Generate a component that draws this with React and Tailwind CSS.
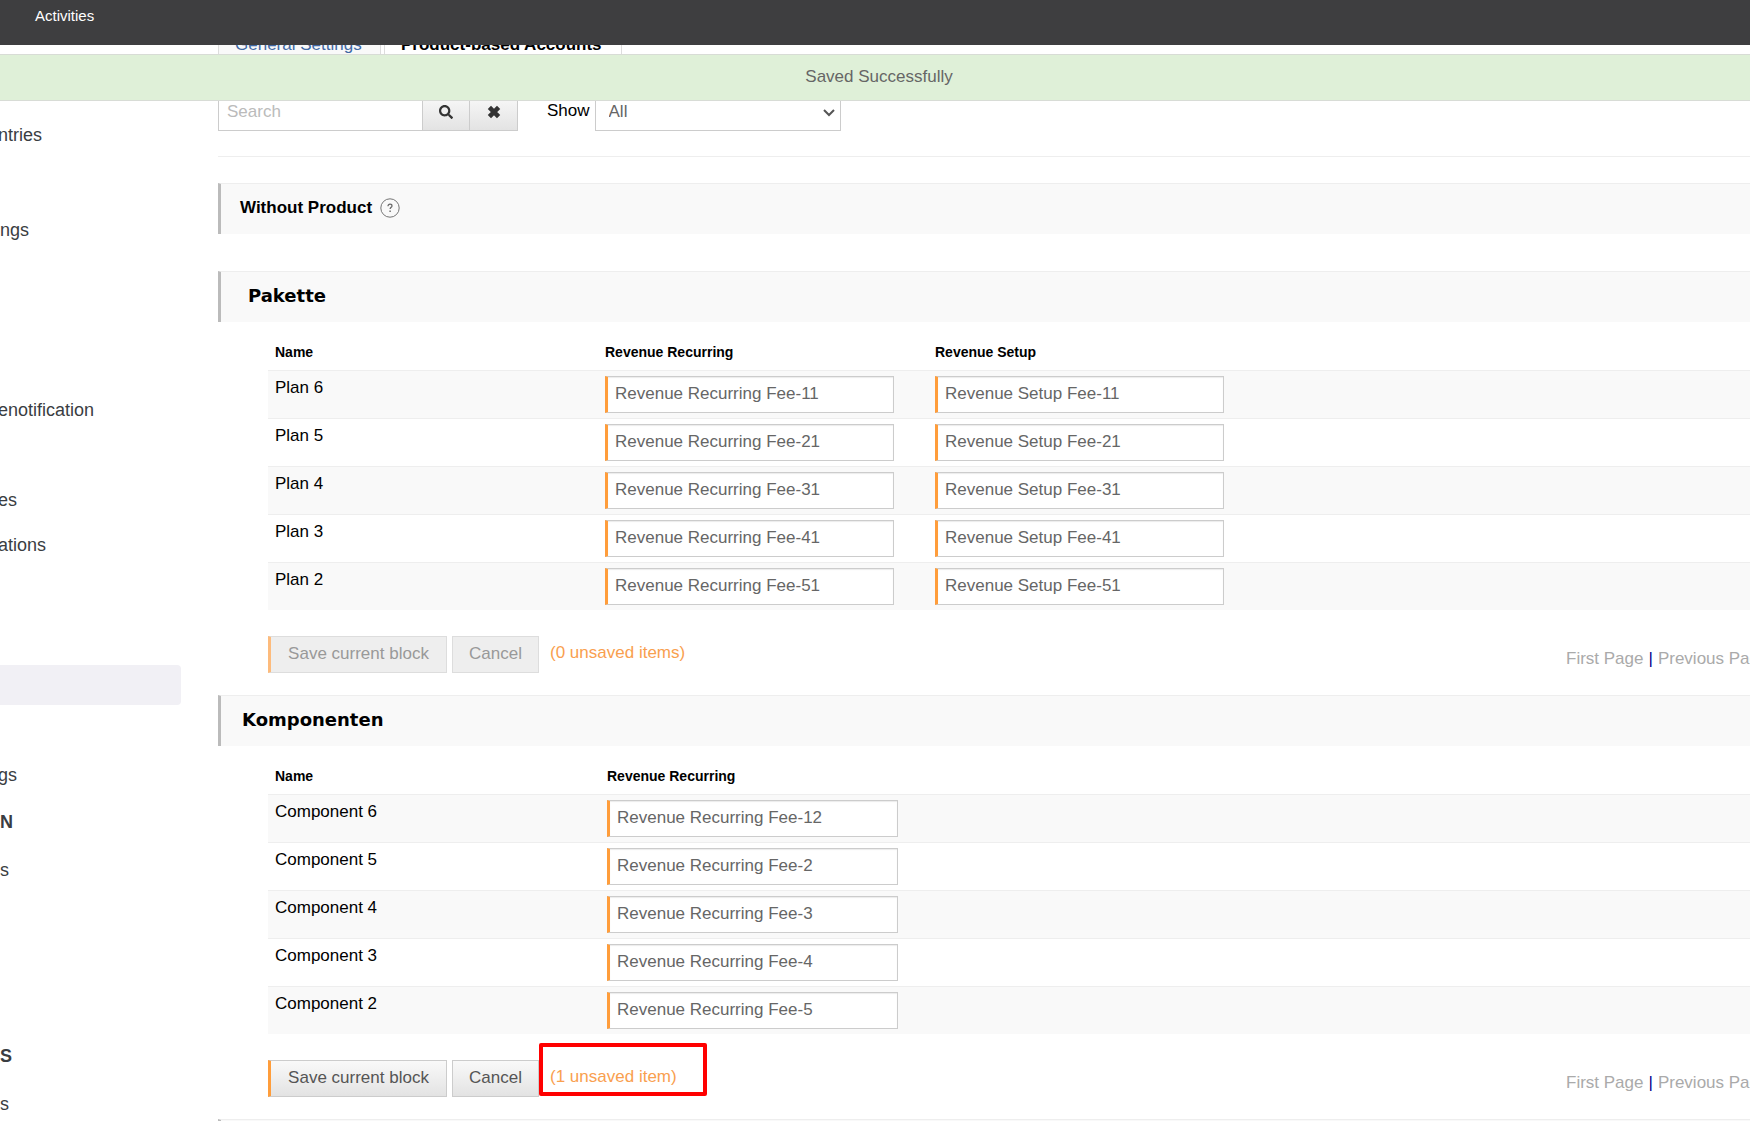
import { FaSearch } from 'react-icons/fa';

// empty labels are entries scrolled out of view to the left
const SIDEBAR = [
  { label: 'ntries', cut: true },
  { heading: true },
  { label: 'ngs' },
  {},
  {},
  {},
  { label: 'enotification', cut: true },
  {},
  { label: 'es', cut: true },
  { label: 'ations', cut: true },
  {},
  { heading: true },
  { active: true },
  {},
  { label: 'gs', cut: true },
  { heading: true, label: 'N' },
  { label: 's' },
  {},
  {},
  {},
  { heading: true, label: 'S', spaced: true },
  { label: 's' },
];

const PLANS = [
  { name: 'Plan 6', values: ['Revenue Recurring Fee-11', 'Revenue Setup Fee-11'] },
  { name: 'Plan 5', values: ['Revenue Recurring Fee-21', 'Revenue Setup Fee-21'] },
  { name: 'Plan 4', values: ['Revenue Recurring Fee-31', 'Revenue Setup Fee-31'] },
  { name: 'Plan 3', values: ['Revenue Recurring Fee-41', 'Revenue Setup Fee-41'] },
  { name: 'Plan 2', values: ['Revenue Recurring Fee-51', 'Revenue Setup Fee-51'] },
];

const COMPONENTS = [
  { name: 'Component 6', values: ['Revenue Recurring Fee-12'] },
  { name: 'Component 5', values: ['Revenue Recurring Fee-2'] },
  { name: 'Component 4', values: ['Revenue Recurring Fee-3'] },
  { name: 'Component 3', values: ['Revenue Recurring Fee-4'] },
  { name: 'Component 2', values: ['Revenue Recurring Fee-5'] },
];

const BUTTON = 'h-[37px] border pb-0.5 text-[17px]';
const ENABLED = 'border-[#ccc] bg-linear-to-b from-[#f9f9f9] to-[#e3e3e3] text-[#555]';
const DISABLED = 'border-[#ddd] bg-[#eee] text-[#999]';

export default function App() {
  return (
    <div className="h-screen overflow-hidden bg-white font-['Liberation_Sans',Arial,sans-serif] text-[17px] leading-6 text-black">
      <header className="fixed inset-x-0 top-0 z-20 h-[45px] bg-[#3e3e40] pl-[35px]">
        <a href="#activities" className="text-[15px] leading-8 text-white">Activities</a>
      </header>
      <div role="status" className="fixed inset-x-0 top-[54px] z-10 flex h-[47px] items-center justify-center border-y border-[#d8dcd6] bg-[#dff0d8] pb-0.5 pl-2 text-[#666]">
        Saved Successfully
      </div>

      <div className="flex">
        <Sidebar />
        <main className="min-w-0 flex-1 pt-[25px]">
          <Tabs />
          <Filters />
          <hr className="mt-[25px] mb-[26px] border-[#eee]" />

          <section className="mb-[37px]">
            <SectionBar className="pl-[19px]">
              <h2 className="font-bold">Without Product</h2>
              <HelpIcon />
            </SectionBar>
          </section>

          <Block title="Pakette" barClass="pl-[27px]" columns={['Revenue Recurring', 'Revenue Setup']} colClass="w-[330px]" inputClass="w-[289px]" rows={PLANS} unsaved={0} />
          <Block title="Komponenten" barClass="pl-[21px]" columns={['Revenue Recurring']} colClass="w-[332px]" inputClass="w-[291px]" rows={COMPONENTS} unsaved={1} />
          <SectionBar />
        </main>
      </div>
    </div>
  );
}

function Sidebar() {
  return (
    <nav className="w-[218px] shrink-0 overflow-hidden pt-28 text-[18px] text-[#3a3d42]">
      <ul>
        {SIDEBAR.map((item, i) => (
          <li key={i} className={`flex items-center ${item.heading ? 'h-[50px] font-bold' : 'h-[45px]'} ${item.spaced ? 'mt-1' : ''}`}>
            {item.active && <span className="h-10 w-[181px] rounded-r bg-[#f1f0f5]" />}
            {item.label && item.heading && <span>{item.label}</span>}
            {item.label && !item.heading && <a href="#settings" className={item.cut ? '-ml-0.5' : ''}>{item.label}</a>}
          </li>
        ))}
      </ul>
    </nav>
  );
}

function Tabs() {
  return (
    <nav className="flex h-10 gap-[3px] border-b border-[#ddd]">
      <a href="#general" className="w-[163px] border border-[#ddd] bg-[#f9f9f9] px-4 pt-[7px] text-[#4068a4]">General Settings</a>
      <a href="#accounts" className="w-[238px] border border-[#ddd] bg-white px-4 pt-[7px] font-bold whitespace-nowrap">Product-based Accounts</a>
    </nav>
  );
}

function Filters() {
  return (
    <div className="mt-[29px] flex h-[37px]">
      <input type="text" aria-label="Search" placeholder="Search" className="w-[204px] border border-r-0 border-[#ccc] px-2 pb-0.5 placeholder:text-[#bbb]" />
      <button aria-label="Search" className={`flex w-12 items-center justify-center border pb-0.5 ${ENABLED}`}>
        <FaSearch className="h-[14px] w-[14px] text-[#333]" />
      </button>
      <button aria-label="Clear" className={`flex w-12 items-center justify-center border border-l-0 pb-0.5 ${ENABLED}`}>
        <svg viewBox="0 0 14 14" className="h-[14px] w-[14px]" stroke="#333" strokeWidth="4.6">
          <path d="M2.4 2.4l9.2 9.2M11.6 2.4l-9.2 9.2" />
        </svg>
      </button>
      <label htmlFor="show" className="mr-[5px] ml-[29px] pt-[5px]">Show</label>
      <div className="relative">
        <select id="show" className="h-full w-[246px] appearance-none border border-[#ccc] bg-white px-[13px] pb-0.5 text-[#666]">
          <option>All</option>
        </select>
        <svg viewBox="0 0 12 8" className="pointer-events-none absolute top-[15px] right-1.5 h-2 w-3" fill="none" stroke="#555" strokeWidth="2">
          <path d="M1 1l5 5 5-5" />
        </svg>
      </div>
    </div>
  );
}

function SectionBar({ className = '', children }) {
  return <div className={`flex h-[51px] items-center border-t border-l-3 border-t-[#eee] border-l-[#bbb] bg-[#f9f9f9] pb-[3px] ${className}`}>{children}</div>;
}

function HelpIcon() {
  return (
    <svg viewBox="0 0 20 20" className="ml-2 h-5 w-5" fill="none" stroke="#666">
      <circle cx="10" cy="10" r="9.2" strokeWidth="0.9" />
      <path d="M8 8.2C8 6.9 8.9 6.2 10 6.2s2 .7 2 1.7c0 1.3-1.9 1.5-1.9 3.2" strokeWidth="1.2" />
      <path d="M10.1 12.6v1.5" strokeWidth="1.4" />
    </svg>
  );
}

function Block({ title, barClass, columns, colClass, inputClass, rows, unsaved }) {
  const off = unsaved === 0;
  return (
    <section className="mb-[22px]">
      <SectionBar className={barClass}>
        <h2 className="font-['DejaVu_Sans',Verdana,sans-serif] text-[18px] font-bold">{title}</h2>
      </SectionBar>
      <div className="pl-[50px]">
        <table className="w-full table-fixed border-separate border-spacing-0 text-left">
          <thead>
            <tr className="h-12 text-[14px] leading-5">
              <th className={`${colClass} pb-2 pl-[7px] align-bottom`}>Name</th>
              {columns.map(c => <th key={c} className={`${colClass} pb-2 pl-[7px] align-bottom`}>{c}</th>)}
              <td />
            </tr>
          </thead>
          <tbody>
            {rows.map(row => (
              <tr key={row.name} className="odd:bg-[#f9f9f9]">
                <td className="border-t border-[#eee] py-[5px] pl-[7px] align-top">{row.name}</td>
                {row.values.map((v, i) => (
                  <td key={v} className="border-t border-[#eee] py-[5px] pl-[7px]">
                    <input type="text" defaultValue={v} aria-label={`${row.name} ${columns[i]}`}
                      className={`${inputClass} block h-[37px] border border-l-3 border-[#ccc] border-l-[#ff9d3b] bg-white px-[7px] pb-0.5 text-[#666] shadow-[inset_0_1px_1px_rgba(0,0,0,0.08)]`} />
                  </td>
                ))}
                <td className="border-t border-[#eee]" />
              </tr>
            ))}
          </tbody>
        </table>

        <div className="flex pt-[26px]">
          <button disabled={off} className={`${BUTTON} w-[179px] border-l-3 ${off ? DISABLED : ENABLED} ${off ? 'border-l-[#fdbb7c]' : 'border-l-[#ff9d3b]'}`}>Save current block</button>
          <button disabled={off} className={`${BUTTON} ml-[5px] w-[87px] ${off ? DISABLED : ENABLED}`}>Cancel</button>
          <div className="relative ml-[11px] pt-[5px] text-[#f9a04f]">
            ({unsaved} unsaved {unsaved === 1 ? 'item' : 'items'})
            {!off && <div className="absolute -top-[17px] -left-[11px] h-[53px] w-[168px] rounded-xs border-4 border-[#ff0000]" />}
          </div>
          <nav className="ml-auto flex w-[184px] gap-[5px] overflow-hidden pt-[11px] whitespace-nowrap text-[#aaa]">
            <a href="#first">First Page</a>
            <span className="text-[#00008b]">|</span>
            <a href="#previous">Previous Page</a>
          </nav>
        </div>
      </div>
    </section>
  );
}
